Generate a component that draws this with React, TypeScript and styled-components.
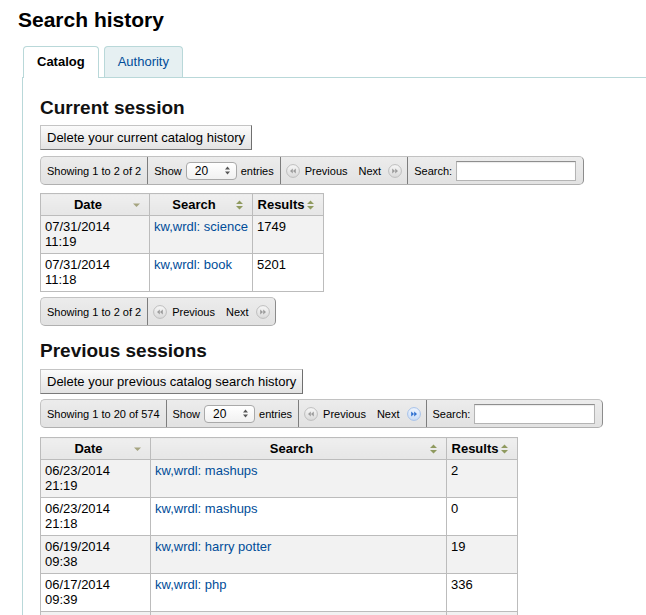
import React from 'react';
import styled, { createGlobalStyle } from 'styled-components';

const GlobalStyle = createGlobalStyle`
  html, body { margin: 0; padding: 0; background: #fff; overflow: hidden; }
  body { font-family: "Liberation Sans", Arial, Helvetica, sans-serif; color: #000; }
`;

const Page = styled.div`
  padding: 6px 0 0 18px;
`;

const Title = styled.h1`
  margin: 0 0 12px;
  font-size: 21px;
  line-height: 28px;
  font-weight: bold;
  color: #000;
`;

const TabsWrap = styled.div`
  margin-left: 4px;
`;

const TabList = styled.div`
  display: flex;
  align-items: flex-start;
  gap: 5px;
  padding-left: 1px;
  margin-bottom: -1px;
  position: relative;
  z-index: 1;
`;

const Tab = styled.div<{ $active?: boolean }>`
  box-sizing: border-box;
  height: ${(p) => (p.$active ? 32 : 31)}px;
  padding: 0 13px ${(p) => (p.$active ? 1 : 0)}px;
  line-height: 30px;
  font-size: 13px;
  font-weight: ${(p) => (p.$active ? 'bold' : 'normal')};
  color: ${(p) => (p.$active ? '#000' : '#004d99')};
  background: ${(p) => (p.$active ? '#fff' : '#e6f0f2')};
  border: 1px solid #b9d8d9;
  border-bottom: none;
  border-radius: 4px 4px 0 0;
`;

const Panel = styled.div`
  border: 1px solid #b9d8d9;
  border-right: none;
  border-bottom: none;
  padding: 0 0 40px 17px;
  min-height: 600px;
`;

const Section = styled.section`
  display: flex;
  flex-direction: column;
  align-items: flex-start;
`;

const Heading = styled.h2<{ $top: number; $bottom: number }>`
  margin: ${(p) => p.$top}px 0 ${(p) => p.$bottom}px;
  font-size: 19px;
  line-height: 22px;
  font-weight: bold;
  color: #111;
`;

const Button = styled.button<{ $mb: number }>`
  box-sizing: border-box;
  height: 25px;
  padding: 0 6px;
  font-family: inherit;
  font-size: 13px;
  color: #000;
  background: linear-gradient(#fbfbfb, #e3e3e3);
  border: 1px solid #c4c4c4;
  border-right-color: #6f6f6f;
  border-bottom-color: #7a7a7a;
  border-radius: 0;
  margin-bottom: ${(p) => p.$mb}px;
`;

const Toolbar = styled.div<{ $mb: number }>`
  display: flex;
  box-sizing: border-box;
  height: 29px;
  margin-bottom: ${(p) => p.$mb}px;
  border: 1px solid #c2c2c2;
  border-right-color: #8c8c8c;
  border-bottom-color: #b0b0b0;
  border-radius: 5px;
  background: linear-gradient(#ececec, #e2e2e2);
  font-size: 11px;
  color: #000;
`;

const Segment = styled.div`
  display: flex;
  align-items: center;
  gap: 4px;
  padding: 0 6px;
  white-space: nowrap;
  & + & {
    border-left: 1px solid #7d7d7d;
  }
`;

const SearchSegment = styled(Segment)`
  padding-right: 7px;
`;

const PagerSegment = styled(Segment)`
  gap: 0;
  padding: 0 5px;
`;

const PagerLabel = styled.span<{ $ml: number }>`
  margin-left: ${(p) => p.$ml}px;
`;

const PagerIconWrap = styled.span<{ $ml: number }>`
  display: flex;
  margin-left: ${(p) => p.$ml}px;
`;

const Select = styled.div`
  box-sizing: border-box;
  display: flex;
  align-items: center;
  justify-content: space-between;
  width: 51px;
  height: 18px;
  padding: 0 6px 0 8px;
  border: 1px solid #a9a9a9;
  border-radius: 4px;
  background: linear-gradient(#ffffff, #f1f1f1);
  font-size: 12px;
`;

const SearchInput = styled.div<{ $w: number }>`
  box-sizing: border-box;
  width: ${(p) => p.$w}px;
  height: 20px;
  border: 1px solid #b4b4b4;
  border-top-color: #8e8e8e;
  background: #fff;
  box-shadow: inset 0 1px 1px rgba(0, 0, 0, 0.08);
`;

const Table = styled.table<{ $mb: number }>`
  border-collapse: collapse;
  table-layout: fixed;
  font-size: 13px;
  line-height: 15px;
  margin-bottom: ${(p) => p.$mb}px;
  border: 1px solid #bcbcbc;
  tbody tr:nth-child(odd) td {
    background: #f2f2f2;
  }
`;

const Th = styled.th<{ $w: number }>`
  box-sizing: border-box;
  width: ${(p) => p.$w}px;
  padding: 3px 9px 3px 4px;
  border: 1px solid #bcbcbc;
  background: linear-gradient(#efefef, #e6e6e6);
  font-weight: bold;
  color: #000;
`;

const ThInner = styled.div`
  display: flex;
  align-items: center;
`;

const ThLabel = styled.span`
  flex: 1;
  text-align: center;
`;

const SortWrap = styled.span`
  display: flex;
  margin-left: 2px;
`;

const Td = styled.td`
  padding: 3px 4px 4px;
  border: 1px solid #bcbcbc;
  vertical-align: top;
  background: #fff;
  color: #000;
`;

const Link = styled.a`
  color: #004d99;
  text-decoration: none;
`;

const SortIcon = ({ kind }: { kind: 'both' | 'desc' }) =>
  kind === 'both' ? (
    <svg width="7" height="10" viewBox="0 0 7 10">
      <path d="M3.5 0.5 L7 4 L0 4 Z M0 6 L7 6 L3.5 9.5 Z" fill="#8f9a5f" />
    </svg>
  ) : (
    <svg width="7" height="10" viewBox="0 0 7 10">
      <path d="M0 3.5 L7 3.5 L3.5 7 Z" fill="#a5a480" />
    </svg>
  );

const PagerIcon = ({ dir, active }: { dir: 'prev' | 'next'; active?: boolean }) => {
  const id = `g-${dir}-${active ? 'a' : 'd'}`;
  const tri = active ? '#2d6fd0' : '#9c9c9c';
  const tris =
    dir === 'prev'
      ? 'M6.8 4.6 L4 7 L6.8 9.4 Z M9.8 4.6 L7 7 L9.8 9.4 Z'
      : 'M4.2 4.6 L7 7 L4.2 9.4 Z M7.2 4.6 L10 7 L7.2 9.4 Z';
  return (
    <svg width="14" height="14" viewBox="0 0 14 14">
      <defs>
        <linearGradient id={id} x1="0" y1="0" x2="0" y2="1">
          <stop offset="0" stopColor={active ? '#eef4fd' : '#f7f7f7'} />
          <stop offset="1" stopColor={active ? '#c9dcf6' : '#d9d9d9'} />
        </linearGradient>
      </defs>
      <circle cx="7" cy="7" r="6.4" fill={`url(#${id})`} stroke={active ? '#a6c1e8' : '#bdbdbd'} strokeWidth="1" />
      <path d={tris} fill={tri} />
    </svg>
  );
};

const SelectArrows = () => (
  <svg width="5" height="9" viewBox="0 0 5 9">
    <path d="M2.5 0.5 L5 3.5 L0 3.5 Z M0 5.5 L5 5.5 L2.5 8.5 Z" fill="#555" />
  </svg>
);

type Row = { d: string; t: string; q: string; r: string };

const current: Row[] = [
  { d: '07/31/2014', t: '11:19', q: 'kw,wrdl: science', r: '1749' },
  { d: '07/31/2014', t: '11:18', q: 'kw,wrdl: book', r: '5201' },
];

const previous: Row[] = [
  { d: '06/23/2014', t: '21:19', q: 'kw,wrdl: mashups', r: '2' },
  { d: '06/23/2014', t: '21:18', q: 'kw,wrdl: mashups', r: '0' },
  { d: '06/19/2014', t: '09:38', q: 'kw,wrdl: harry potter', r: '19' },
  { d: '06/17/2014', t: '09:39', q: 'kw,wrdl: php', r: '336' },
  { d: '06/17/2014', t: '09:38', q: 'kw,wrdl: php', r: '336' },
];

const Pager = ({ nextActive }: { nextActive?: boolean }) => (
  <PagerSegment>
    <PagerIcon dir="prev" />
    <PagerLabel $ml={5}>Previous</PagerLabel>
    <PagerLabel $ml={11}>Next</PagerLabel>
    <PagerIconWrap $ml={7}>
      <PagerIcon dir="next" active={nextActive} />
    </PagerIconWrap>
  </PagerSegment>
);

const FullToolbar = ({ info, nextActive, inputW, mb }: { info: string; nextActive?: boolean; inputW: number; mb: number }) => (
  <Toolbar $mb={mb}>
    <Segment>{info}</Segment>
    <Segment>
      <span>Show</span>
      <Select>
        <span>20</span>
        <SelectArrows />
      </Select>
      <span>entries</span>
    </Segment>
    <Pager nextActive={nextActive} />
    <SearchSegment>
      <span>Search:</span>
      <SearchInput $w={inputW} />
    </SearchSegment>
  </Toolbar>
);

const HistoryTable = ({ rows, widths, mb }: { rows: Row[]; widths: [number, number, number]; mb: number }) => (
  <Table $mb={mb}>
    <thead>
      <tr>
        <Th $w={widths[0]}>
          <ThInner>
            <ThLabel>Date</ThLabel>
            <SortWrap>
              <SortIcon kind="desc" />
            </SortWrap>
          </ThInner>
        </Th>
        <Th $w={widths[1]}>
          <ThInner>
            <ThLabel>Search</ThLabel>
            <SortWrap>
              <SortIcon kind="both" />
            </SortWrap>
          </ThInner>
        </Th>
        <Th $w={widths[2]}>
          <ThInner>
            <ThLabel>Results</ThLabel>
            <SortWrap>
              <SortIcon kind="both" />
            </SortWrap>
          </ThInner>
        </Th>
      </tr>
    </thead>
    <tbody>
      {rows.map((r, i) => (
        <tr key={i}>
          <Td>
            {r.d}
            <br />
            {r.t}
          </Td>
          <Td>
            <Link href="#">{r.q}</Link>
          </Td>
          <Td>{r.r}</Td>
        </tr>
      ))}
    </tbody>
  </Table>
);

export default function App() {
  return (
    <>
      <GlobalStyle />
      <Page>
        <Title>Search history</Title>
        <TabsWrap>
          <TabList>
            <Tab $active>Catalog</Tab>
            <Tab>Authority</Tab>
          </TabList>
          <Panel>
            <Section>
              <Heading $top={19} $bottom={6}>Current session</Heading>
              <Button $mb={6}>Delete your current catalog history</Button>
              <FullToolbar info="Showing 1 to 2 of 2" inputW={120} mb={8} />
              <HistoryTable rows={current} widths={[109, 103, 71]} mb={5} />
              <Toolbar $mb={0}>
                <Segment>Showing 1 to 2 of 2</Segment>
                <Pager />
              </Toolbar>
            </Section>
            <Section>
              <Heading $top={14} $bottom={7}>Previous sessions</Heading>
              <Button $mb={5}>Delete your previous catalog search history</Button>
              <FullToolbar info="Showing 1 to 20 of 574" nextActive inputW={121} mb={9} />
              <HistoryTable rows={previous} widths={[110, 296, 71]} mb={0} />
            </Section>
          </Panel>
        </TabsWrap>
      </Page>
    </>
  );
}
